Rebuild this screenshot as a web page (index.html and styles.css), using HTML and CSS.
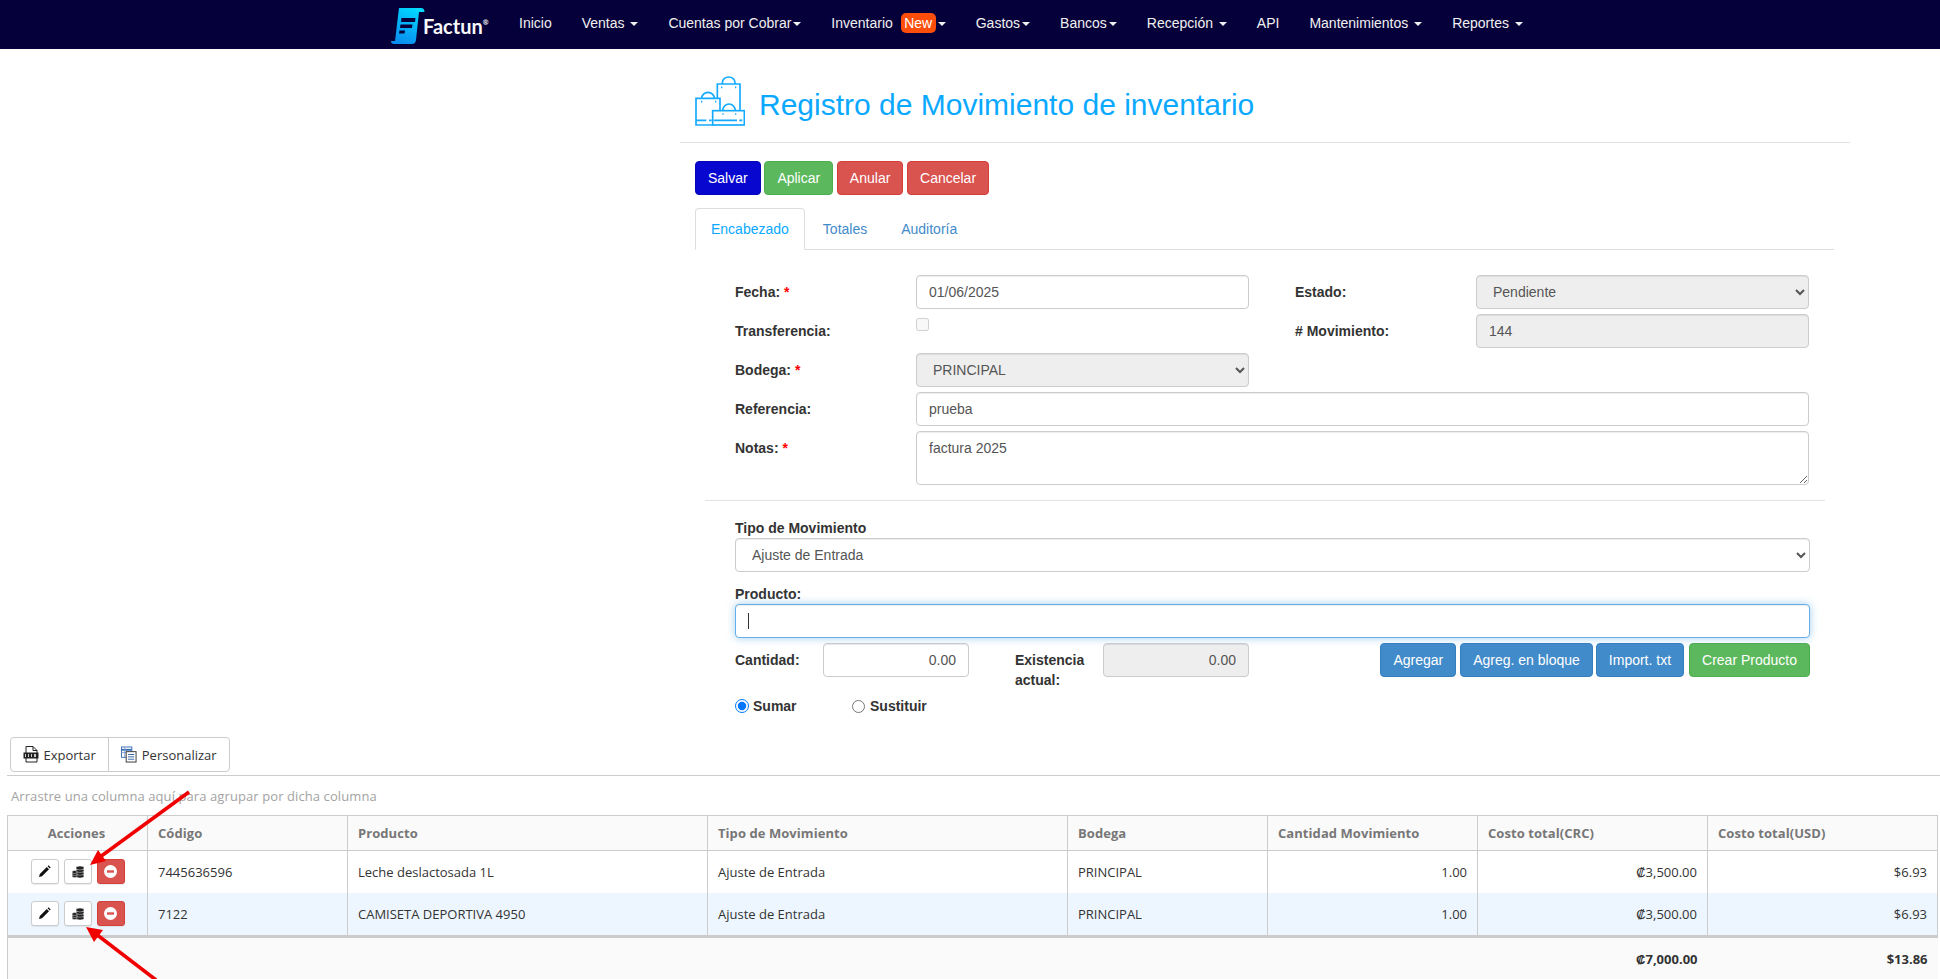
FILE: index.html
```html
<!DOCTYPE html>
<html lang="es">
<head>
<meta charset="utf-8">
<title>Registro de Movimiento de inventario</title>
<link rel="stylesheet" href="styles.css">
</head>
<body>
<nav class="navbar">
  <a class="brand" href="#">
    <svg class="brand-icon" width="34" height="36" viewBox="0 0 34 36">
      <defs><linearGradient id="lg" x1="0.7" y1="0" x2="0.3" y2="1"><stop offset="0" stop-color="#00d8ff"/><stop offset="1" stop-color="#0a8cf0"/></linearGradient></defs>
      <path d="M8 0H30Q33.500 0 33.500 4H28L25 32Q24.500 36 21 36H3Q0 36 0 33H4Z" fill="url(#lg)"/>
      <path d="M10.500 10H24.500L24 14H10ZM9.500 16.500H21.500L21 20H9ZM8.500 22.500H14L13.500 25.500H8Z" fill="#06003a"/>
    </svg>
    <span class="brand-text">Factun<sup>®</sup></span>
  </a>
  <a class="nav-link" href="#">Inicio</a>
  <a class="nav-link" href="#">Ventas <i class="caret"></i></a>
  <a class="nav-link" href="#">Cuentas por Cobrar<i class="caret"></i></a>
  <a class="nav-link" href="#">Inventario <span class="badge-new">New</span><i class="caret"></i></a>
  <a class="nav-link" href="#">Gastos<i class="caret"></i></a>
  <a class="nav-link" href="#">Bancos<i class="caret"></i></a>
  <a class="nav-link" href="#">Recepción <i class="caret"></i></a>
  <a class="nav-link" href="#">API</a>
  <a class="nav-link" href="#">Mantenimientos <i class="caret"></i></a>
  <a class="nav-link" href="#">Reportes <i class="caret"></i></a>
</nav>

<main class="sheet">
  <header class="page-head">
    <svg class="bags" width="50" height="50" viewBox="30 18 150 150" fill="none" stroke="#14aaff" stroke-width="5">
      <path d="M97 85V42H165V122"/>
      <path d="M112 42V38a19 17 0 0 1 38 0V42"/>
      <path d="M83 165H33V85H105V122"/>
      <path d="M50 85a19 18 0 0 1 38 0"/>
      <path d="M33 151H64M72 151H80"/>
      <rect x="83" y="122" width="95" height="43"/>
      <path d="M113 122a19 20 0 0 1 38 0"/>
      <path d="M86 151H156M163 151H172"/>
      <path d="M108 52h4M150 52h4M48 95h4M90 95h4M112 132h4M150 132h4"/>
    </svg>
    <h1 class="page-title">Registro de Movimiento de inventario</h1>
  </header>

  <div class="actions">
    <button class="btn btn-navy">Salvar</button>
    <button class="btn btn-green">Aplicar</button>
    <button class="btn btn-red">Anular</button>
    <button class="btn btn-red">Cancelar</button>
  </div>

  <ul class="tabs">
    <li class="tab tab-active">Encabezado</li>
    <li class="tab">Totales</li>
    <li class="tab">Auditoría</li>
  </ul>

  <form class="form">
    <div class="fields">
      <label class="lbl">Fecha: <span class="req">*</span></label>
      <input class="ctl" type="text" value="01/06/2025">
      <span></span>
      <label class="lbl">Estado:</label>
      <select class="ctl ctl-off" disabled><option>Pendiente</option></select>

      <label class="lbl">Transferencia:</label>
      <div class="check-cell"><input class="check" type="checkbox" disabled></div>
      <span></span>
      <label class="lbl"># Movimiento:</label>
      <input class="ctl ctl-off" type="text" value="144" disabled>

      <label class="lbl">Bodega: <span class="req">*</span></label>
      <select class="ctl ctl-off" disabled><option>PRINCIPAL</option></select>
      <span class="span-3"></span>

      <label class="lbl">Referencia:</label>
      <input class="ctl span-4" type="text" value="prueba">

      <label class="lbl">Notas: <span class="req">*</span></label>
      <textarea class="ctl notes span-4">factura 2025</textarea>
    </div>

    <hr class="rule">

    <label class="lbl-top lbl-tipo">Tipo de Movimiento</label>
    <select class="ctl"><option>Ajuste de Entrada</option></select>

    <label class="lbl-top lbl-prod">Producto:</label>
    <div class="prod-wrap">
      <input class="ctl ctl-focus" type="text">
      <span class="text-caret"></span>
    </div>

    <div class="qty-row">
      <label class="lbl-qty">Cantidad:</label>
      <input class="ctl num qty-input" type="text" value="0.00">
      <label class="lbl-qty lbl-exist">Existencia actual:</label>
      <input class="ctl ctl-off num qty-input" type="text" value="0.00" disabled>
      <div class="qty-actions">
        <button class="btn btn-blue" type="button">Agregar</button>
        <button class="btn btn-blue" type="button">Agreg. en bloque</button>
        <button class="btn btn-blue tight" type="button">Import. txt</button>
        <button class="btn btn-green wide-gap" type="button">Crear Producto</button>
      </div>
    </div>

    <div class="radios">
      <label class="radio radio-a"><input type="radio" name="modo" checked>Sumar</label>
      <label class="radio"><input type="radio" name="modo">Sustituir</label>
    </div>
  </form>
</main>

<section class="grid-panel">
  <div class="toolbar">
    <div class="tool-group">
      <button class="tool">
        <svg width="16" height="17" viewBox="0 0 16 17"><path d="M3 .5H10L14 4.500V16H3Z" fill="#fff" stroke="#222"/><path d="M10 .5V4.500H14" fill="none" stroke="#222"/><rect x="0.500" y="6.500" width="15" height="6" fill="#222"/><path d="M2 8h1v3H2zM5 8h1v3H5zM8 8h1v3H8zM11 8h2v3h-2z" fill="#ccc"/></svg>
        Exportar
      </button>
      <button class="tool">
        <svg width="16" height="17" viewBox="0 0 17 17"><rect x=".5" y=".5" width="11" height="11" fill="#fff" stroke="#3a6fb5"/><path d="M.5 3.500h11" stroke="#3a6fb5" stroke-width="2"/><path d="M4 1v10M.5 6.500h11" stroke="#7aa0d0"/><rect x="5.500" y="5.500" width="10.500" height="11" fill="#fff" stroke="#333"/><path d="M7.500 8.500h6.500M7.500 11h6.500M7.500 13.500h6.500" stroke="#2f5f9f"/></svg>
        Personalizar
      </button>
    </div>
  </div>
  <p class="hint">Arrastre una columna aquí para agrupar por dicha columna</p>
  <table class="grid">
    <colgroup>
      <col class="c1"><col class="c2"><col class="c3"><col class="c4"><col class="c5"><col class="c6"><col class="c7"><col class="c8">
    </colgroup>
    <thead>
      <tr><th class="center">Acciones</th><th>Código</th><th>Producto</th><th>Tipo de Movimiento</th><th>Bodega</th><th>Cantidad Movimiento</th><th>Costo total(CRC)</th><th>Costo total(USD)</th></tr>
    </thead>
    <tbody>
      <tr>
        <td><div class="row-btns">
          <button class="mini"><svg width="13" height="13" viewBox="0 0 13 13"><path d="M1 12L1.800 9 8.800 2 11 4.200 4 11.200Z" fill="#111"/><path d="M9.600 1.200L10.500 .3 12.700 2.500 11.800 3.400Z" fill="#111"/></svg></button>
          <button class="mini"><svg width="12" height="12" viewBox="0 0 12 12"><g fill="#222" stroke="#fff" stroke-width=".4"><ellipse cx="8" cy="10" rx="4" ry="1.900"/><ellipse cx="8" cy="7.300" rx="4" ry="1.900"/><ellipse cx="8" cy="4.600" rx="4" ry="1.900"/><ellipse cx="8" cy="2" rx="4" ry="1.900"/><ellipse cx="2.600" cy="10" rx="2.600" ry="1.500"/><ellipse cx="2.600" cy="8" rx="2.600" ry="1.500"/><ellipse cx="2.600" cy="6" rx="2.600" ry="1.500"/></g></svg></button>
          <button class="mini mini-red"><svg width="13" height="13" viewBox="0 0 13 13"><circle cx="6.500" cy="6.500" r="6.500" fill="#fff"/><rect x="3" y="5.300" width="7" height="2.400" fill="#d9534f"/></svg></button>
        </div></td>
        <td>7445636596</td><td>Leche deslactosada 1L</td><td>Ajuste de Entrada</td><td>PRINCIPAL</td><td class="num-cell">1.00</td><td class="num-cell">₡3,500.00</td><td class="num-cell">$6.93</td>
      </tr>
      <tr class="alt">
        <td><div class="row-btns">
          <button class="mini"><svg width="13" height="13" viewBox="0 0 13 13"><path d="M1 12L1.800 9 8.800 2 11 4.200 4 11.200Z" fill="#111"/><path d="M9.600 1.200L10.500 .3 12.700 2.500 11.800 3.400Z" fill="#111"/></svg></button>
          <button class="mini"><svg width="12" height="12" viewBox="0 0 12 12"><g fill="#222" stroke="#fff" stroke-width=".4"><ellipse cx="8" cy="10" rx="4" ry="1.900"/><ellipse cx="8" cy="7.300" rx="4" ry="1.900"/><ellipse cx="8" cy="4.600" rx="4" ry="1.900"/><ellipse cx="8" cy="2" rx="4" ry="1.900"/><ellipse cx="2.600" cy="10" rx="2.600" ry="1.500"/><ellipse cx="2.600" cy="8" rx="2.600" ry="1.500"/><ellipse cx="2.600" cy="6" rx="2.600" ry="1.500"/></g></svg></button>
          <button class="mini mini-red"><svg width="13" height="13" viewBox="0 0 13 13"><circle cx="6.500" cy="6.500" r="6.500" fill="#fff"/><rect x="3" y="5.300" width="7" height="2.400" fill="#d9534f"/></svg></button>
        </div></td>
        <td>7122</td><td>CAMISETA DEPORTIVA 4950</td><td>Ajuste de Entrada</td><td>PRINCIPAL</td><td class="num-cell">1.00</td><td class="num-cell">₡3,500.00</td><td class="num-cell">$6.93</td>
      </tr>
    </tbody>
    <tfoot>
      <tr><td colspan="6"></td><td class="num-cell">₡7,000.00</td><td class="num-cell">$13.86</td></tr>
    </tfoot>
  </table>
</section>

<svg class="arrows" width="1940" height="979" viewBox="0 0 1940 979">
  <path d="M189 792L100 857" stroke="#f00000" stroke-width="3.500" fill="none"/>
  <path d="M90 865L98 850 106 861Z" fill="#f00000"/>
  <path d="M156 980L96 934" stroke="#f00000" stroke-width="3.500" fill="none"/>
  <path d="M86 927L103 930 94 942Z" fill="#f00000"/>
</svg>
</body>
</html>
```

FILE: styles.css
```css
* { box-sizing: border-box; }
html { overflow: hidden; height: 100%; }
body {
  margin: 0;
  position: relative;
  background: #fff;
  color: #333;
  font-family: "Liberation Sans", Arial, sans-serif;
  font-size: 14px;
  line-height: 20px;
}

/* Navbar */
.navbar {
  display: flex;
  align-items: center;
  height: 49px;
  padding-left: 391px;
  background: #06003a;
}
.brand {
  display: flex;
  align-items: center;
  width: 113px;
  text-decoration: none;
}
.brand-icon { flex: none; margin-top: 2px; }
.brand-text {
  margin-left: -2px;
  margin-top: 3px;
  color: #f8f8f8;
  font-family: Lato, sans-serif;
  font-weight: 700;
  font-size: 20px;
  line-height: 24px;
}
.brand-text sup { font-size: 7px; line-height: 0; vertical-align: 9px; }
.nav-link {
  display: block;
  padding: 0 15px;
  margin-top: -3px;
  color: #f0f0f0;
  text-decoration: none;
  white-space: nowrap;
}
.caret {
  display: inline-block;
  width: 0;
  height: 0;
  margin-left: 2px;
  vertical-align: middle;
  border-top: 4px solid #f0f0f0;
  border-left: 4px solid transparent;
  border-right: 4px solid transparent;
}
.badge-new {
  display: inline-block;
  margin-left: 4px;
  padding: 0 3.5px;
  background: #ff4d0a;
  border-radius: 5px;
  color: #fff;
}

/* Main sheet */
.sheet { width: 1170px; margin-left: 680px; }
.page-head {
  display: flex;
  align-items: center;
  gap: 14px;
  padding: 27px 0 16px 15px;
  border-bottom: 1px solid #e2e2e2;
}
.page-title {
  margin: 7px 0 0;
  color: #0aa9ff;
  font-size: 30px;
  font-weight: 400;
  line-height: 33px;
}
.actions { display: flex; gap: 3.7px; padding: 18px 0 0 15px; }
.btn {
  height: 34px;
  padding: 6px 12px;
  border: 1px solid transparent;
  border-radius: 4px;
  color: #fff;
  font: 14px/20px "Liberation Sans", Arial, sans-serif;
  white-space: nowrap;
}
.btn-navy { background: #0707d0; border-color: #0606b8; }
.btn-green { background: #5cb85c; border-color: #4cae4c; }
.btn-red { background: #d9534f; border-color: #d43f3a; }
.btn-blue { background: #428bca; border-color: #357ebd; }

/* Tabs */
.tabs {
  display: flex;
  width: 1139px;
  height: 42px;
  margin: 13px 0 0 15px;
  padding: 0;
  list-style: none;
  border-bottom: 1px solid #ddd;
}
.tab {
  height: 42px;
  padding: 10px 15px;
  margin-right: 2px;
  border: 1px solid transparent;
  color: #428bca;
}
.tab-active {
  border-color: #ddd #ddd #fff;
  border-radius: 4px 4px 0 0;
  background: #fff;
  color: #0aa9ff;
}

/* Form */
.form { display: flex; flex-direction: column; width: 1130px; margin-top: 25px; padding-left: 55px; }
.fields {
  display: grid;
  grid-template-columns: 181px 333px 46px 181px 333px;
  row-gap: 5px;
  width: 1074px;
}
.span-3 { grid-column: span 3; }
.span-4 { grid-column: span 4; width: calc(100% + 1px); }
.lbl { font-weight: 700; line-height: 34px; }
.req { color: #f00; }
.ctl {
  display: block;
  width: 100%;
  height: 34px;
  padding: 6px 12px;
  border: 1px solid #ccc;
  border-radius: 4px;
  background: #fff;
  color: #555;
  font: 14px/20px "Liberation Sans", Arial, sans-serif;
  box-shadow: inset 0 1px 1px rgba(0, 0, 0, .075);
}
.ctl-off { background: #eee; color: #555; opacity: 1; }
.notes { height: 54px; }
.ctl-focus {
  border-color: #66afe9;
  outline: 0;
  box-shadow: inset 0 1px 1px rgba(0, 0, 0, .075), 0 0 8px rgba(102, 175, 233, .6);
}
.check-cell { padding-top: 4px; }
.check { display: block; width: 13px; height: 13px; margin: 0; }
.rule { width: 1120px; height: 1px; margin: 15px 0 17px -30px; border: 0; background: #e2e2e2; }
.lbl-top { display: block; font-weight: 700; line-height: 20px; }
.lbl-prod { margin-top: 12px; }
.prod-wrap { position: relative; }
.text-caret { position: absolute; left: 13px; top: 9px; width: 1px; height: 16px; background: #333; }
.qty-row { display: flex; align-items: flex-start; margin-top: 5px; }
.lbl-qty { flex: none; width: 88px; padding-top: 7px; font-weight: 700; }
.lbl-exist { margin-left: 46px; }
.qty-input { flex: none; width: 146px; }
.num { text-align: right; }
.qty-actions { display: flex; gap: 4px; margin-left: auto; }
.tight { margin-left: -1px; }
.wide-gap { margin-left: 1px; }
.radios { display: flex; margin-top: 6px; height: 20px; }
.radio { display: flex; align-items: center; font-weight: 700; }
.radio-a { width: 117px; }
.radio input { width: 13px; height: 13px; margin: 0 5px 0 0; }
.radio-a input { width: 14px; height: 14px; margin-right: 4px; }

/* Grid */
.grid-panel {
  margin-top: 21px;
  padding-left: 7px;
  color: #333;
  font-family: "Open Sans", sans-serif;
  font-size: 13px;
}
.toolbar { padding: 0 0 3px 2.5px; border-bottom: 1px solid #ccc; }
.tool-group {
  display: inline-flex;
  height: 35px;
  border: 1px solid #ccc;
  border-radius: 4px;
  background: #fff;
}
.tool {
  display: flex;
  align-items: center;
  gap: 5px;
  padding: 0 12px;
  border: 0;
  background: transparent;
  color: #333;
  font: 13px/20px "Open Sans", sans-serif;
}
.tool + .tool { border-left: 1px solid #ccc; }
.hint {
  height: 39px;
  margin: 0;
  padding: 10px 0 0 4px;
  color: #a3a3a3;
  line-height: 20px;
  letter-spacing: .09px;
}
.grid {
  width: 1930px;
  border-collapse: collapse;
  table-layout: fixed;
}
.c1 { width: 140px; }
.c2 { width: 200px; }
.c3 { width: 360px; }
.c4 { width: 360px; }
.c5 { width: 200px; }
.c6 { width: 210px; }
.c7 { width: 230px; }
.c8 { width: 230px; }
.grid th, .grid td { padding: 0 10px; border: 1px solid #ccc; text-align: left; white-space: nowrap; }
.grid th { height: 35px; background: #fafafa; color: #777; font-weight: 700; letter-spacing: .06px; }
.grid th.center { padding-right: 12px; text-align: center; }
.grid tbody td { height: 42px; border-top: 0; border-bottom: 0; }
.grid tbody tr:last-child td { border-bottom: 3px solid #ccc; height: 44px; }
.grid .num-cell { text-align: right; }
.alt td { background: #edf6fe; }
.grid tfoot td { height: 44px; border: 0; background: #fafafa; font-weight: 700; }
.grid tfoot td:first-child { border-left: 1px solid #ccc; }
.row-btns { display: flex; justify-content: center; gap: 5px; }
.mini {
  display: flex;
  align-items: center;
  justify-content: center;
  width: 28px;
  height: 25px;
  padding: 0;
  border: 1px solid #ccc;
  border-radius: 3px;
  background: #fff;
  box-shadow: 0 1px 1px rgba(0, 0, 0, .08);
}
.mini-red { background: #d9534f; border-color: #d43f3a; }
.arrows { position: absolute; left: 0; top: 0; pointer-events: none; }
```
